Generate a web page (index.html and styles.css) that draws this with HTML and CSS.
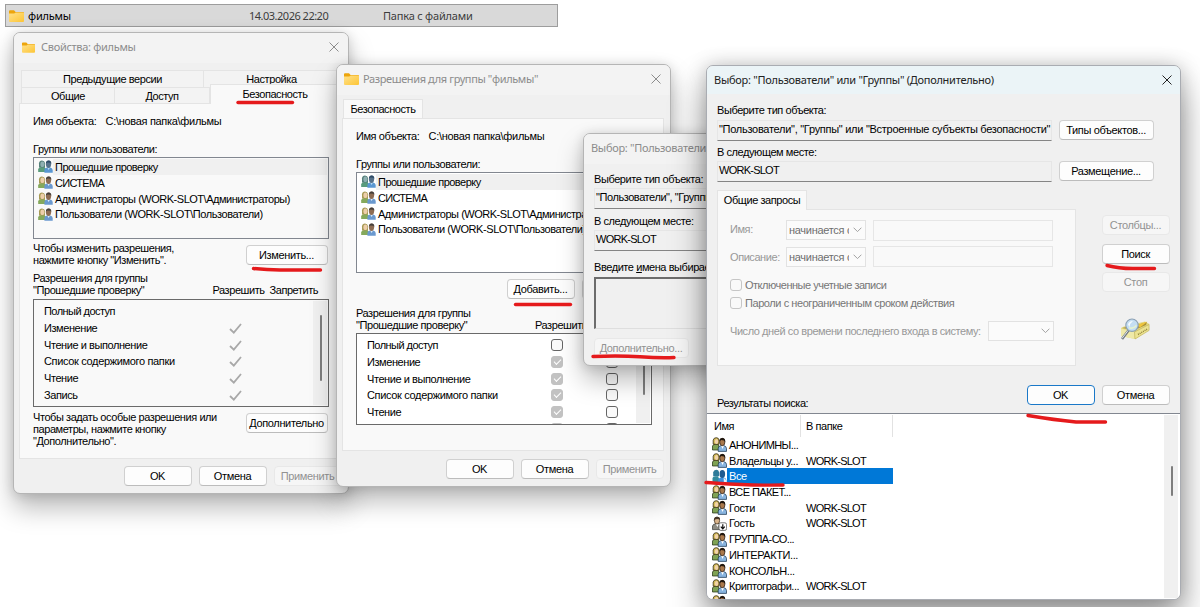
FILE: index.html
```html
<!DOCTYPE html>
<html lang="ru">
<head>
<meta charset="utf-8">
<title>Права доступа к папке</title>
<link rel="stylesheet" href="styles.css">
</head>
<body>
<svg class="defs" width="0" height="0">
  <defs>
    <linearGradient id="fg" x1="0" y1="0" x2="1" y2="1"><stop offset="0" stop-color="#ffe18b"/><stop offset="1" stop-color="#fdc535"/></linearGradient>
    <symbol id="folder" viewBox="0 0 15 12"><path d="M0 1.2Q0 .3 1 .3H5L6.6 2H14Q15 2 15 3V6H0Z" fill="#eda50c"/><path d="M0 3.6H5.2L6.8 2.4H14Q15 2.4 15 3.3V11Q15 12 14 12H1Q0 12 0 11Z" fill="url(#fg)"/></symbol>
    <symbol id="users" viewBox="0 0 15 13"><path d="M.2 12V9.2Q.4 7.2 3 7H6.6L9 12Z" fill="#85a95c"/><path d="M1 7.4V3.2Q1.4.4 4 .4T7 3V7.4Z" fill="#a79a55"/><ellipse cx="4.4" cy="4.3" rx="2" ry="2.8" fill="#edceaa"/><path d="M6.4 12.7V10Q6.5 7.8 9 7.5H12.3Q14.6 8 14.7 10V12.7Z" fill="#6a99cf"/><path d="M9.2 7.4H12L10.6 10Z" fill="#dcebf8"/><ellipse cx="10.5" cy="4.2" rx="2.6" ry="3.7" fill="#8d6c53"/><path d="M7.8 3.6Q8 .4 10.8.4T13.3 4L12.4 2.8 9.6 2.6Z" fill="#443e3a"/></symbol>
    <symbol id="users-sel" viewBox="0 0 15 13"><path d="M.2 12V9.2Q.4 7.2 3 7H6.6L9 12Z" fill="#5a9c7c"/><path d="M1 7.4V3.2Q1.4.4 4 .4T7 3V7.4Z" fill="#55807a"/><ellipse cx="4.4" cy="4.3" rx="2" ry="2.8" fill="#8fb0b2"/><path d="M6.4 12.7V10Q6.5 7.8 9 7.5H12.3Q14.6 8 14.7 10V12.7Z" fill="#5a97d2"/><path d="M9.2 7.4H12L10.6 10Z" fill="#b9dbf1"/><ellipse cx="10.5" cy="4.2" rx="2.6" ry="3.7" fill="#56718a"/><path d="M7.8 3.6Q8 .4 10.8.4T13.3 4L12.4 2.8 9.6 2.6Z" fill="#2c4a66"/></symbol>
    <symbol id="people" viewBox="0 0 15 15"><path d="M.5 13V9Q1 7.4 3.4 7.2H6L8.4 13Z" fill="#7fa254" stroke="#1d2c10" stroke-width=".7"/><path d="M1.2 7.2V3.2Q1.7.7 4.2.7T7 3V7.2Z" fill="#d4bd55" stroke="#33270e" stroke-width=".8"/><ellipse cx="4.5" cy="4.4" rx="1.7" ry="2.5" fill="#f2d3ac"/><path d="M6.2 14.4V11Q6.8 8.9 9 8.6H11.9Q14.3 9.2 14.5 11.4V14.4Z" fill="#88b4df" stroke="#17304c" stroke-width=".7"/><path d="M9 8.6H12L10.6 12Z" fill="#fff"/><ellipse cx="10.3" cy="5" rx="2.6" ry="3.7" fill="#aa794c" stroke="#24170f" stroke-width=".7"/><path d="M7.4 4.4Q7.3 1 10.4 1T13.2 5L12 3.4 9 3.1Z" fill="#20170f"/></symbol>
    <symbol id="people-sel" viewBox="0 0 15 15"><path d="M.5 13V9Q1 7.4 3.4 7.2H6L8.4 13Z" fill="#318b9d"/><path d="M1.2 7.2V3.2Q1.7.7 4.2.7T7 3V7.2Z" fill="#2e7b99"/><path d="M6.2 14.4V11Q6.8 8.9 9 8.6H11.9Q14.3 9.2 14.5 11.4V14.4Z" fill="#3b90dc"/><path d="M11.6 8.6L14.5 11.4V14.4H12Z" fill="#e7f3fc"/><ellipse cx="10.3" cy="5" rx="2.8" ry="4" fill="#1e5b91"/></symbol>
    <symbol id="guest" viewBox="0 0 15 15"><path d="M.5 13.6V10Q1 8 3.4 7.8H7L9 13.6Z" fill="#8e8c83" stroke="#333" stroke-width=".7"/><path d="M3.6 8H7L5.6 11Z" fill="#fff"/><ellipse cx="5" cy="4.6" rx="2.6" ry="3.5" fill="#d9b48c" stroke="#33220f" stroke-width=".7"/><path d="M1.8 5Q1.6.8 5 .7T8 4L6.4 3 3.4 3.2Z" fill="#453528"/><rect x="7" y="6.8" width="7.6" height="7.6" rx="1.8" fill="#fff" stroke="#555" stroke-width=".8"/><path d="M10.8 8.2V12.6M8.8 10.7L10.8 12.8L12.8 10.7" fill="none" stroke="#111" stroke-width="1.2"/></symbol>
    <symbol id="tick" viewBox="0 0 13 11"><path d="M1 6L4.8 9.6L12 1" fill="none" stroke="#a9a9a9" stroke-width="1.8"/></symbol>
    <symbol id="close" viewBox="0 0 10 10"><path d="M.5.5L9.5 9.5M9.5.5L.5 9.5" fill="none" stroke="currentColor" stroke-width="1"/></symbol>
    <symbol id="chev" viewBox="0 0 9 6"><path d="M.6.7L4.5 4.6L8.4.7" fill="none" stroke="#a2a2a2" stroke-width="1"/></symbol>
  </defs>
</svg>

<div class="file-row"><svg class="ic-folder"><use href="#folder"/></svg><span class="f-name">фильмы</span><span class="f-date">14.03.2026 22:20</span><span class="f-type">Папка с файлами</span></div>

<section class="win w1">
  <header class="title"><svg class="ic-folder sm"><use href="#folder"/></svg><span class="t1">Свойства: фильмы</span><svg class="ic-close"><use href="#close"/></svg></header>
  <div class="tabs1"><div class="tab prev"><span>Предыдущие версии</span></div><div class="tab cust"><span>Настройка</span></div></div>
  <div class="tabs2"><div class="tab gen"><span>Общие</span></div><div class="tab share"><span>Доступ</span></div><div class="tab sec"><span>Безопасность</span></div></div>
  <div class="panel p1">
    <div class="name"><span class="s-name">Имя объекта:</span><span class="s-path">C:\новая папка\фильмы</span></div>
    <div class="glabel"><span class="s-grp">Группы или пользователи:</span></div>
    <ul class="groups g1">
      <li><svg><use href="#users-sel"/></svg><span class="sel s-auth">Прошедшие проверку</span></li>
      <li><svg><use href="#users"/></svg><span class="s-sys">СИСТЕМА</span></li>
      <li><svg><use href="#users"/></svg><span class="s-adm">Администраторы (WORK-SLOT\Администраторы)</span></li>
      <li><svg><use href="#users"/></svg><span class="s-usr">Пользователи (WORK-SLOT\Пользователи)</span></li>
    </ul>
    <div class="hint h1"><p><span>Чтобы изменить разрешения,</span><br><span>нажмите кнопку "Изменить".</span></p><button class="btn b81">Изменить...</button></div>
    <div class="plabel pl1"><p><span>Разрешения для группы</span><br><span>"Прошедшие проверку"</span></p><span class="allow">Разрешить</span><span class="deny">Запретить</span></div>
    <div class="perms pm1">
      <ul>
        <li><span class="s-full">Полный доступ</span></li>
        <li><span>Изменение</span><svg><use href="#tick"/></svg></li>
        <li><span>Чтение и выполнение</span><svg><use href="#tick"/></svg></li>
        <li><span class="s-list">Список содержимого папки</span><svg><use href="#tick"/></svg></li>
        <li><span>Чтение</span><svg><use href="#tick"/></svg></li>
        <li><span>Запись</span><svg><use href="#tick"/></svg></li>
      </ul>
      <div class="scroll"><i></i></div>
    </div>
    <div class="hint h2"><p><span>Чтобы задать особые разрешения или</span><br><span>параметры, нажмите кнопку</span><br><span>"Дополнительно".</span></p><button class="btn b81">Дополнительно</button></div>
  </div>
  <footer class="foot ft1"><button class="btn">OK</button><button class="btn">Отмена</button><button class="btn off">Применить</button></footer>
</section>

<section class="win w2">
  <header class="title"><svg class="ic-folder"><use href="#folder"/></svg><span class="t2">Разрешения для группы "фильмы"</span><svg class="ic-close"><use href="#close"/></svg></header>
  <div class="tab only"><span>Безопасность</span></div>
  <div class="panel p2">
    <div class="name"><span class="s-name">Имя объекта:</span><span class="s-path">C:\новая папка\фильмы</span></div>
    <div class="glabel"><span class="s-grp">Группы или пользователи:</span></div>
    <ul class="groups g2">
      <li><svg><use href="#users-sel"/></svg><span class="sel s-auth">Прошедшие проверку</span></li>
      <li><svg><use href="#users"/></svg><span class="s-sys">СИСТЕМА</span></li>
      <li><svg><use href="#users"/></svg><span class="s-adm">Администраторы (WORK-SLOT\Администраторы)</span></li>
      <li><svg><use href="#users"/></svg><span class="s-usr">Пользователи (WORK-SLOT\Пользователи)</span></li>
    </ul>
    <div class="addrow"><button class="btn">Добавить...</button><button class="btn b81"></button></div>
    <div class="plabel pl2"><p><span>Разрешения для группы</span><br><span>"Прошедшие проверку"</span></p><span class="allow">Разрешить</span></div>
    <div class="perms pm2">
      <ul>
        <li><span class="s-full">Полный доступ</span><i class="cb"></i><i class="cb"></i></li>
        <li><span>Изменение</span><i class="cb on"></i><i class="cb"></i></li>
        <li><span>Чтение и выполнение</span><i class="cb on"></i><i class="cb"></i></li>
        <li><span class="s-list">Список содержимого папки</span><i class="cb on"></i><i class="cb"></i></li>
        <li><span>Чтение</span><i class="cb on"></i><i class="cb"></i></li>
        <li><span></span><i class="cb on"></i><i class="cb"></i></li>
      </ul>
      <div class="scroll"><i></i></div>
    </div>
  </div>
  <footer class="foot ft2"><button class="btn">OK</button><button class="btn">Отмена</button><button class="btn off">Применить</button></footer>
</section>

<section class="win w3">
  <header class="title"><span class="t3">Выбор: "Пользователи"</span></header>
  <div class="body3">
    <label class="s-type">Выберите тип объекта:</label>
    <div class="field"><span>"Пользователи", "Группы"</span></div>
    <label class="s-loc">В следующем месте:</label>
    <div class="field"><span class="ws">WORK-SLOT</span></div>
    <label class="enter">Введите <u>и</u>мена выбираемых</label>
    <div class="namesbox"></div>
    <button class="btn off wide">Дополнительно...</button>
  </div>
</section>

<section class="win w4">
  <header class="title"><span class="t4">Выбор: "Пользователи" или "Группы" (Дополнительно)</span><svg class="ic-close"><use href="#close"/></svg></header>
  <div class="body4">
    <label class="s-type">Выберите тип объекта:</label>
    <div class="line"><div class="field"><span class="s-types">"Пользователи", "Группы" или "Встроенные субъекты безопасности"</span></div><button class="btn wide">Типы объектов...</button></div>
    <label class="s-loc">В следующем месте:</label>
    <div class="line"><div class="field"><span class="ws">WORK-SLOT</span></div><button class="btn wide">Размещение...</button></div>
    <div class="query">
      <div class="qleft">
        <div class="tab common"><span>Общие запросы</span></div>
        <div class="panel qpanel">
          <div class="qrow"><span class="ql">Имя:</span><span class="combo"><b>начинается с</b><svg><use href="#chev"/></svg></span><span class="inp"></span></div>
          <div class="qrow r2"><span class="ql">Описание:</span><span class="combo"><b>начинается с</b><svg><use href="#chev"/></svg></span><span class="inp"></span></div>
          <div class="chk c1"><i></i><span>Отключенные учетные записи</span></div>
          <div class="chk c2"><i></i><span>Пароли с неограниченным сроком действия</span></div>
          <div class="days"><span class="s-days">Число дней со времени последнего входа в систему:</span><span class="combo"><svg><use href="#chev"/></svg></span></div>
        </div>
      </div>
      <div class="qright">
        <button class="btn off">Столбцы...</button><button class="btn">Поиск</button><button class="btn off">Стоп</button>
        <svg class="search" viewBox="0 0 30 24"><path d="M1 10L4 8.500L25 3.500L29.300 6V12L15.500 21L1 18Z" fill="#e4d880"/><path d="M2 10L17 7L27 4L26 7L14.500 12Z" fill="#a8913a"/><path d="M17 7L27.500 3.500L20 9.500Z" fill="#f0c53c"/><path d="M1 10.500L14.500 14V21L1 18Z" fill="#efe9a8"/><path d="M14.500 14L29 6.500V12.500L15 21Z" fill="#ece391" stroke="#b5a752" stroke-width=".5"/><path d="M18 16.500L27.500 11" stroke="#92833b" stroke-width="1.500" stroke-dasharray="1 .9"/><path d="M8.500 12.500L2 21" stroke="#737a82" stroke-width="2.600"/><path d="M8 12.500L2 20.400" stroke="#dfe5ea" stroke-width="1"/><circle cx="12" cy="7.200" r="6.200" fill="#c4def3" stroke="#8ba0b4" stroke-width="1.100"/><path d="M8 6.500Q9 3 13 3Q10 5 9.500 9Z" fill="#f5fbff"/><path d="M9 9.500Q13 11.500 16.500 7.500" stroke="#e6f3cf" stroke-width="1.600" fill="none"/></svg>
      </div>
    </div>
    <div class="okrow"><span class="s-res">Результаты поиска:</span><button class="btn primary">OK</button><button class="btn">Отмена</button></div>
  </div>
  <div class="results">
    <div class="rmain">
      <div class="rhead"><span>Имя</span><span>В папке</span></div>
      <ul>
        <li><svg><use href="#people"/></svg><span class="caps">АНОНИМНЫ...</span></li>
        <li><svg><use href="#people"/></svg><span>Владельцы у...</span><em class="ws">WORK-SLOT</em></li>
        <li class="picked"><svg><use href="#people-sel"/></svg><span>Все</span></li>
        <li><svg><use href="#people"/></svg><span class="caps">ВСЕ ПАКЕТ...</span></li>
        <li><svg><use href="#people"/></svg><span>Гости</span><em class="ws">WORK-SLOT</em></li>
        <li><svg><use href="#guest"/></svg><span>Гость</span><em class="ws">WORK-SLOT</em></li>
        <li><svg><use href="#people"/></svg><span class="caps">ГРУППА-СО...</span></li>
        <li><svg><use href="#people"/></svg><span>ИНТЕРАКТИ...</span></li>
        <li><svg><use href="#people"/></svg><span>КОНСОЛЬН...</span></li>
        <li><svg><use href="#people"/></svg><span>Криптографи...</span><em class="ws">WORK-SLOT</em></li>
        <li><svg><use href="#people"/></svg></li>
      </ul>
    </div>
    <div class="scroll rs"><i></i></div>
  </div>
</section>

<svg class="marks" viewBox="0 0 1200 607">
  <path d="M238 102.500H292.500"/>
  <path d="M253.500 268.500Q267 270 280 270H320.500"/>
  <path d="M515.500 304.500H570.500"/>
  <path d="M593 356.500Q620 355.500 640 356.800T674 357.500"/>
  <path d="M1107 265.500Q1120 268.800 1135 268.500H1154.500"/>
  <path d="M1028 415.500Q1055 420 1076 422H1105.500"/>
  <path d="M706 482.500C730 484 748 485.800 783 485"/>
</svg>
</body>
</html>
```

FILE: styles.css
```css
* { box-sizing: border-box; }
body { margin: 0; width: 1200px; height: 607px; overflow: hidden; position: relative; background: #fff; font: 11px/12px "Liberation Sans", Arial, sans-serif; letter-spacing: -.43px; color: #000; }
ul, p { margin: 0; padding: 0; list-style: none; }
span, label { white-space: nowrap; }
svg { display: block; flex: none; }
.defs { position: absolute; }

.file-row { position: absolute; left: 5px; top: 4px; width: 553px; height: 23px; border: 1px solid #9d9d9d; background: #d9d9d9; display: flex; align-items: center; padding-left: 3px; font: 11px/14px "Noto Sans", sans-serif; letter-spacing: -.2px; color: #3c3c3c; }
.ic-folder { width: 15px; height: 12px; }
.ic-folder.sm { width: 13px; height: 11px; }
.f-name { margin-left: 4px; width: 221px; color: #000; }
.f-date { width: 134px; letter-spacing: -.5px; }

.win { position: absolute; isolation: isolate; border: 1px solid #b5b5b5; border-radius: 7px; background: #f0f0f0; box-shadow: 0 14px 26px rgba(0,0,0,.27), 0 1px 12px rgba(0,0,0,.14); overflow: hidden; display: flex; flex-direction: column; align-items: flex-start; }
.w1 { left: 13px; top: 32px; width: 336px; height: 462px; }
.w2 { left: 336px; top: 64px; width: 335px; height: 423px; }
.w3 { left: 583px; top: 133px; width: 440px; height: 233px; }
.w4 { left: 706px; top: 65px; width: 475px; height: 535px; border-color: #a9acb2; box-shadow: 0 22px 36px rgba(0,0,0,.36), 0 1px 20px rgba(0,0,0,.24); }
.title { align-self: stretch; height: 30px; flex: none; display: flex; align-items: center; background: #f3f3f3; color: #8c8c8c; font: 11px/14px "Noto Sans", sans-serif; letter-spacing: -.3px; padding: 0 9px 2px 7px; }
.title span { margin-left: 5px; }
.w1 .title { padding-left: 8px; }
.t1 { padding-left: 1px; }
.t2 { letter-spacing: -.38px; }
.t4 { letter-spacing: -.27px; }
.title .t2 { margin-left: 4px; }
.ic-close { width: 10px; height: 10px; margin-left: auto; color: #8c8c8c; }
.w4 .title { height: 28px; background: #ebf4f7; color: #222; padding: 0 8px 0 2px; }
.w4 .ic-close { color: #222; }
.w3 .title { padding-left: 2px; }

.tab { border: 1px solid #e4e4e4; background: #f3f3f3; display: flex; align-items: center; justify-content: center; border-bottom: 0; }
.tabs1, .tabs2 { display: flex; flex: none; width: 319px; margin-left: 7px; }
.tabs1 { margin-top: 7px; height: 17px; }
.tabs2 { height: 16px; align-items: stretch; }
.prev { width: 183px; }
.cust { flex: 1; border-left: 0; }
.gen { width: 94px; }
.share { width: 95px; border-left: 0; }
.sec { flex: 1; margin-top: -3px; background: #f9f9f9; z-index: 1; height: 20px; padding-bottom: 2px; }
.panel { border: 1px solid #e4e4e4; background: #f9f9f9; flex: none; }
.p1 { width: 322px; height: 356px; margin-left: 5px; padding-left: 13px; }
.name { display: flex; margin-top: 11px; height: 12px; }
.s-name { width: 72.5px; }
.s-path { letter-spacing: -.3px; }
.glabel { margin-top: 16px; height: 12px; }
.groups { width: 296px; border: 1px solid #828790; background: #fff; margin-top: 2px; padding: 1px 1px 0 4px; overflow: hidden; }
.p1 .groups { background: #f9f9f9; }
.g1 { height: 82px; }
.g2 { height: 101px; }
.groups li { display: flex; height: 15.8px; align-items: center; }
.groups svg { width: 15px; height: 13px; }
.groups li > span { line-height: 16px; height: 16px; padding-left: 2px; }
.groups .sel { background: #f0f0f0; flex: 1; letter-spacing: -.52px; }
.s-sys { letter-spacing: -.7px; }
.s-adm { letter-spacing: -.48px; }
.hint { display: flex; justify-content: space-between; width: 295px; }
.h1 { margin-top: 3px; height: 24px; }
.h2 { margin-top: 4px; height: 36px; }
.h1 .btn { margin-top: 3px; }
.h2 .btn { margin-top: 2px; }
.plabel { display: flex; align-items: flex-end; width: 296px; height: 24px; }
.pl1 { margin-top: 6px; }
.pl2 { margin-top: 8px; }
.plabel p { width: 179.500px; }
.pl2 p { width: 179px; }
.allow { width: 57px; }
.perms { width: 296px; border: 1px solid #6a6a6a; display: flex; justify-content: space-between; padding: 1px; overflow: hidden; margin-top: 3px; }
.pm1 { height: 108px; }
.pm2 { height: 92px; margin-top: 2px; background: #fff; }
.perms ul { padding: 2px 0 0 9px; }
.perms li { display: flex; align-items: center; height: 16.7px; }
.perms li span { width: 185px; }
.perms .s-full { letter-spacing: -.55px; }
.perms .s-list { letter-spacing: -.34px; }
.perms svg { width: 13px; height: 11px; margin-top: 1px; }
.scroll { width: 14px; background: #f0f0f0; flex: none; }
.scroll i { display: block; width: 2px; height: 66px; margin: 14px 0 0 7px; background: #7d7d7d; border-radius: 1px; }
.pm2 .scroll i { height: 46px; }
.cb { width: 12px; height: 12px; border: 1px solid #666; border-radius: 3px; background: #fafafa; display: block; flex: none; position: relative; }
.cb + .cb { margin-left: 43px; }
.cb.on { background: #c2c2c2; border-color: #c2c2c2; }
.cb.on::after { content: ""; position: absolute; left: 2px; top: 2px; width: 6px; height: 3px; border-left: 1px solid #fff; border-bottom: 1px solid #fff; transform: rotate(-45deg); }
.pm2 ul { height: 110px; }
.pm2 li span { width: 184px; }

.btn { font: inherit; letter-spacing: -.35px; color: #000; width: 68px; height: 20px; padding: 0 1px 0 0; margin: 0; border: 1px solid #d0d0d0; border-bottom-color: #bcbcbc; border-radius: 4px; background: #fdfdfd; flex: none; white-space: nowrap; }
.b81 { width: 82px; }
.wide { width: 95px; }
.off { color: #929292; background: #f6f6f6; border-color: #e8e8e8; }
.primary { border-color: #1a78c8; }
.foot { display: flex; gap: 7px; margin-top: 7px; flex: none; }
.ft1 { margin-left: 110px; }
.ft2 { margin: 8px 0 0 109px; }

.only { width: 80px; height: 19px; margin: 4px 0 0 6px; background: #f9f9f9; flex: none; z-index: 1; }
.p2 { width: 322px; height: 333px; margin-left: 5px; padding-left: 13px; }
.addrow { display: flex; gap: 7px; margin: 6px 0 0 151px; }

.body3 { display: flex; flex-direction: column; align-items: flex-start; padding-left: 10px; }
.field { width: 335px; height: 21px; border: 1px solid #e6e6e6; border-bottom-color: #858585; padding: 2px 1px; overflow: hidden; flex: none; }
.s-types { letter-spacing: -.28px; }
.ws { letter-spacing: -.75px; }
.body3 .field { margin-top: 3px; }
.body3 label { height: 12px; margin-top: 6px; }
.body3 label:first-child { margin-top: 9px; }
.body3 .enter { margin-top: 10px; }
.namesbox { width: 335px; height: 52px; margin-top: 4px; border: solid #6c6c6c; border-width: 2px 0 0 2px; border-bottom: 1px solid #dedede; }
.body3 .btn { margin-top: 9px; }

.body4 { padding-left: 10px; display: flex; flex-direction: column; flex: none; }
.body4 label { height: 12px; margin: 10px 0 4px; }
.line { display: flex; gap: 7px; height: 21px; }
.body4 .line + label { margin: 5px 0 3px; }
.query { display: flex; margin-top: 8px; height: 176px; }
.qleft { width: 359px; }
.common { width: 90px; height: 20px; margin-bottom: -1px; background: #f9f9f9; position: relative; padding-bottom: 2px; }
.qpanel { height: 157px; padding: 10px 0 0 12px; color: #989898; }
.qrow { display: flex; height: 21px; }
.qrow.r2 { margin-top: 5px; align-items: flex-end; }
.ql { width: 56px; padding-top: 3px; align-self: flex-start; }
.r2 .ql { padding-top: 5px; }
.combo { width: 80px; height: 20px; border: 1px solid #e2e2e2; display: flex; align-items: center; background: #fbfbfb; }
.combo b { font-weight: 400; width: 62px; padding-left: 2px; overflow: hidden; color: #6e6e6e; letter-spacing: -.3px; }
.combo svg { width: 9px; height: 6px; margin-left: auto; margin-right: 3px; }
.inp { width: 180px; height: 21px; margin-left: 7px; border: 1px solid #e6e6e6; background: #f9f9f9; }
.chk { display: flex; align-items: center; height: 12px; color: #767676; }
.chk i { width: 12px; height: 12px; border: 1px solid #c6c6c6; border-radius: 3px; margin-right: 3px; }
.c1 { margin-top: 12px; letter-spacing: -.49px; }
.c2 { margin-top: 6px; }
.days { display: flex; align-items: center; margin-top: 12px; height: 20px; }
.days .s-days { width: 258px; }
.days .combo { width: 66px; }
.qright { margin-left: 26px; padding-top: 25px; display: flex; flex-direction: column; gap: 8.500px; }
.search { width: 30px; height: 24px; margin: 17px 0 0 18px; }
.okrow { display: flex; height: 28px; margin-top: 19px; gap: 7px; }
.s-res { width: 303px; align-self: flex-end; margin-bottom: 4px; }

.results { align-self: stretch; flex: 1; border-top: 1px solid #828790; background: #fff; display: flex; justify-content: space-between; padding: 1px 2px; overflow: hidden; }
.rmain { width: 300px; }
.rhead { display: flex; height: 22px; line-height: 22px; }
.rhead span { border-right: 1px solid #e2e2e2; width: 92px; padding-left: 5px; }
.results li { display: flex; align-items: center; height: 15.73px; padding-left: 3px; }
.results li svg { width: 15px; height: 15px; }
.results li span { width: 79px; padding-left: 2px; line-height: 16px; }
.results .caps { letter-spacing: -.6px; }
.results em { font-style: normal; }
.results .picked span { width: 166px; background: #0078d7; color: #fff; }
.rs i { height: 30px; margin-top: 51px; }

.marks { position: absolute; z-index: 5; left: 0; top: 0; width: 1200px; height: 607px; pointer-events: none; }
.marks path { fill: none; stroke: #e51a1c; stroke-width: 3.400; stroke-linecap: round; stroke-linejoin: round; }
```
